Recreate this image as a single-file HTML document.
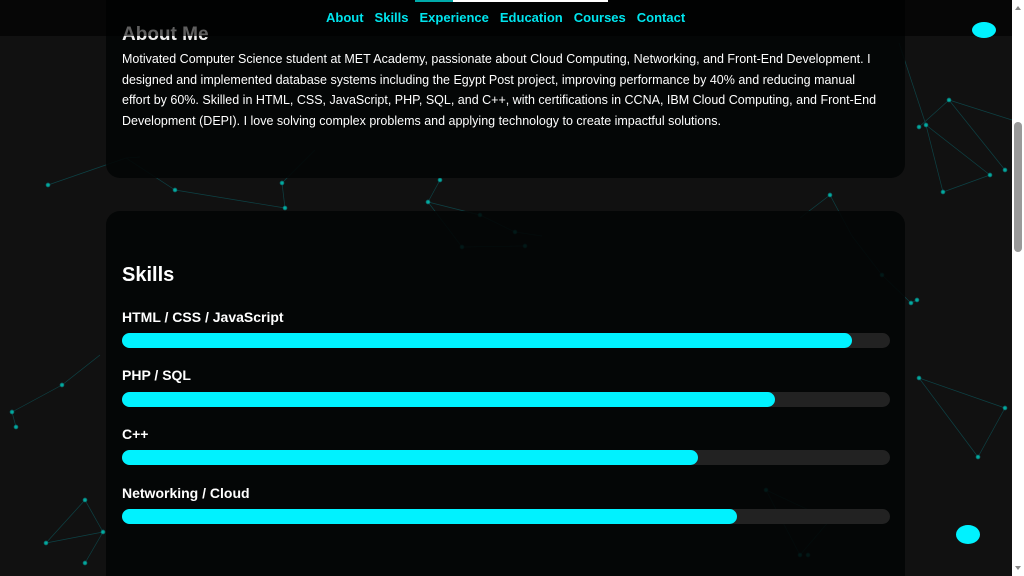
<!DOCTYPE html>
<html><head><meta charset="utf-8"><style>
*{margin:0;padding:0;box-sizing:border-box}
html,body{width:1024px;height:576px;overflow:hidden;background:#111;font-family:"Liberation Sans",sans-serif;color:#fff}
#net{position:absolute;left:0;top:0;z-index:0}
.card{position:absolute;left:106px;width:799px;background:rgba(2,4,4,0.88);border-radius:14px;z-index:1}
.hdr{position:absolute;left:0;top:0;width:1012px;height:36px;background:rgba(0,0,0,0.6);z-index:3}
.nav{position:absolute;top:10px;left:326px;font-weight:bold;font-size:13px;color:#00e5ee;white-space:nowrap;z-index:4}
.nav span{margin-right:11px}
.prog{position:absolute;top:0;left:415px;width:193px;height:2px;background:#fff;z-index:4}
.prog i{display:block;width:38px;height:2px;background:#0aa}
h2{position:absolute;font-size:19px;font-weight:bold}
p.t{position:absolute;left:122px;top:49px;font-size:12.5px;line-height:20.6px;white-space:nowrap;z-index:2}
.lab{position:absolute;left:122px;font-size:14px;font-weight:bold;z-index:2}
.bar{position:absolute;left:122px;width:768px;height:15px;border-radius:8px;background:#222;z-index:2}
.bar i{display:block;height:15px;border-radius:8px;background:#00f2ff}
.dot{position:absolute;background:#00f2ff;border-radius:50%;z-index:5}
#sb{position:absolute;left:1012px;top:0;z-index:9}
</style></head><body>
<svg id="net" width="1012" height="576" stroke="#0a6a70" stroke-width="0.7" fill="#0cb">
<g opacity="0.55">
<line x1="48" y1="185" x2="126" y2="158"/><line x1="126" y1="158" x2="175" y2="190"/><line x1="126" y1="158" x2="140" y2="157"/>
<line x1="175" y1="190" x2="285" y2="208"/><line x1="285" y1="208" x2="282" y2="183"/><line x1="282" y1="183" x2="315" y2="150"/>
<line x1="428" y1="202" x2="480" y2="215"/><line x1="480" y1="215" x2="515" y2="232"/><line x1="515" y1="232" x2="542" y2="236"/><line x1="462" y1="247" x2="525" y2="246"/><line x1="428" y1="202" x2="462" y2="247"/><line x1="440" y1="180" x2="428" y2="202"/>
<line x1="919" y1="127" x2="949" y2="100"/><line x1="949" y1="100" x2="1005" y2="170"/><line x1="926" y1="125" x2="990" y2="175"/><line x1="990" y1="175" x2="943" y2="192"/><line x1="926" y1="125" x2="943" y2="192"/><line x1="899" y1="43" x2="926" y2="125"/><line x1="949" y1="100" x2="1012" y2="120"/>
<line x1="830" y1="195" x2="800" y2="218"/><line x1="830" y1="195" x2="852" y2="236"/><line x1="852" y1="236" x2="882" y2="275"/><line x1="882" y1="275" x2="911" y2="303"/><line x1="911" y1="303" x2="917" y2="300"/>
<line x1="12" y1="412" x2="62" y2="385"/><line x1="12" y1="412" x2="16" y2="427"/><line x1="62" y1="385" x2="100" y2="355"/>
<line x1="919" y1="378" x2="978" y2="457"/><line x1="978" y1="457" x2="1005" y2="408"/><line x1="919" y1="378" x2="1005" y2="408"/>
<line x1="46" y1="543" x2="85" y2="500"/><line x1="85" y1="500" x2="103" y2="532"/><line x1="46" y1="543" x2="103" y2="532"/><line x1="85" y1="563" x2="103" y2="532"/>
<line x1="766" y1="490" x2="800" y2="555"/><line x1="800" y1="555" x2="830" y2="520"/><line x1="766" y1="490" x2="830" y2="520"/>
</g>
<g opacity="0.8">
<circle cx="48" cy="185" r="2"/><circle cx="175" cy="190" r="2"/><circle cx="285" cy="208" r="2"/><circle cx="282" cy="183" r="2"/>
<circle cx="428" cy="202" r="2"/><circle cx="480" cy="215" r="2"/><circle cx="515" cy="232" r="2"/><circle cx="462" cy="247" r="2"/><circle cx="525" cy="246" r="2"/><circle cx="440" cy="180" r="2"/>
<circle cx="919" cy="127" r="2"/><circle cx="926" cy="125" r="2"/><circle cx="949" cy="100" r="2"/><circle cx="990" cy="175" r="2"/><circle cx="1005" cy="170" r="2"/><circle cx="943" cy="192" r="2"/>
<circle cx="830" cy="195" r="2"/><circle cx="911" cy="303" r="2"/><circle cx="917" cy="300" r="2"/><circle cx="882" cy="275" r="2"/>
<circle cx="12" cy="412" r="2"/><circle cx="16" cy="427" r="2"/><circle cx="62" cy="385" r="2"/>
<circle cx="919" cy="378" r="2"/><circle cx="978" cy="457" r="2"/><circle cx="1005" cy="408" r="2"/>
<circle cx="46" cy="543" r="2"/><circle cx="85" cy="500" r="2"/><circle cx="103" cy="532" r="2"/><circle cx="85" cy="563" r="2"/>
<circle cx="766" cy="490" r="2"/><circle cx="800" cy="555" r="2"/><circle cx="808" cy="555" r="2"/>
</g>
</svg>
<div class="card" style="top:-20px;height:198px"></div>
<div class="card" style="top:211px;height:365px;border-radius:14px 14px 0 0"></div>
<h2 style="left:122px;top:24px;color:#eee;z-index:2">About Me</h2>
<div class="hdr"></div>
<div class="prog"><i></i></div>
<div class="nav"><span>About</span><span>Skills</span><span>Experience</span><span>Education</span><span>Courses</span><span style="margin:0">Contact</span></div>
<p class="t">Motivated Computer Science student at MET Academy, passionate about Cloud Computing, Networking, and Front-End Development. I<br>designed and implemented database systems including the Egypt Post project, improving performance by 40% and reducing manual<br>effort by 60%. Skilled in HTML, CSS, JavaScript, PHP, SQL, and C++, with certifications in CCNA, IBM Cloud Computing, and Front-End<br>Development (DEPI). I love solving complex problems and applying technology to create impactful solutions.</p>
<h2 style="left:122px;top:264px;font-size:20px;z-index:2">Skills</h2>
<div class="lab" style="top:309px">HTML / CSS / JavaScript</div>
<div class="bar" style="top:333px"><i style="width:730px"></i></div>
<div class="lab" style="top:367px">PHP / SQL</div>
<div class="bar" style="top:392px"><i style="width:653px"></i></div>
<div class="lab" style="top:426px">C++</div>
<div class="bar" style="top:450px"><i style="width:576px"></i></div>
<div class="lab" style="top:485px">Networking / Cloud</div>
<div class="bar" style="top:509px"><i style="width:615px"></i></div>
<div class="dot" style="left:972px;top:22px;width:24px;height:16px"></div>
<div class="dot" style="left:956px;top:525px;width:24px;height:19px"></div>
<svg id="sb" width="12" height="576"><rect width="12" height="576" fill="#fff"/><rect x="2" y="122" width="8" height="130" rx="4" fill="#999"/><path d="M3 10 L6 6 L9 10Z M3 566 L6 570 L9 566Z" fill="#888"/></svg>
</body></html>
